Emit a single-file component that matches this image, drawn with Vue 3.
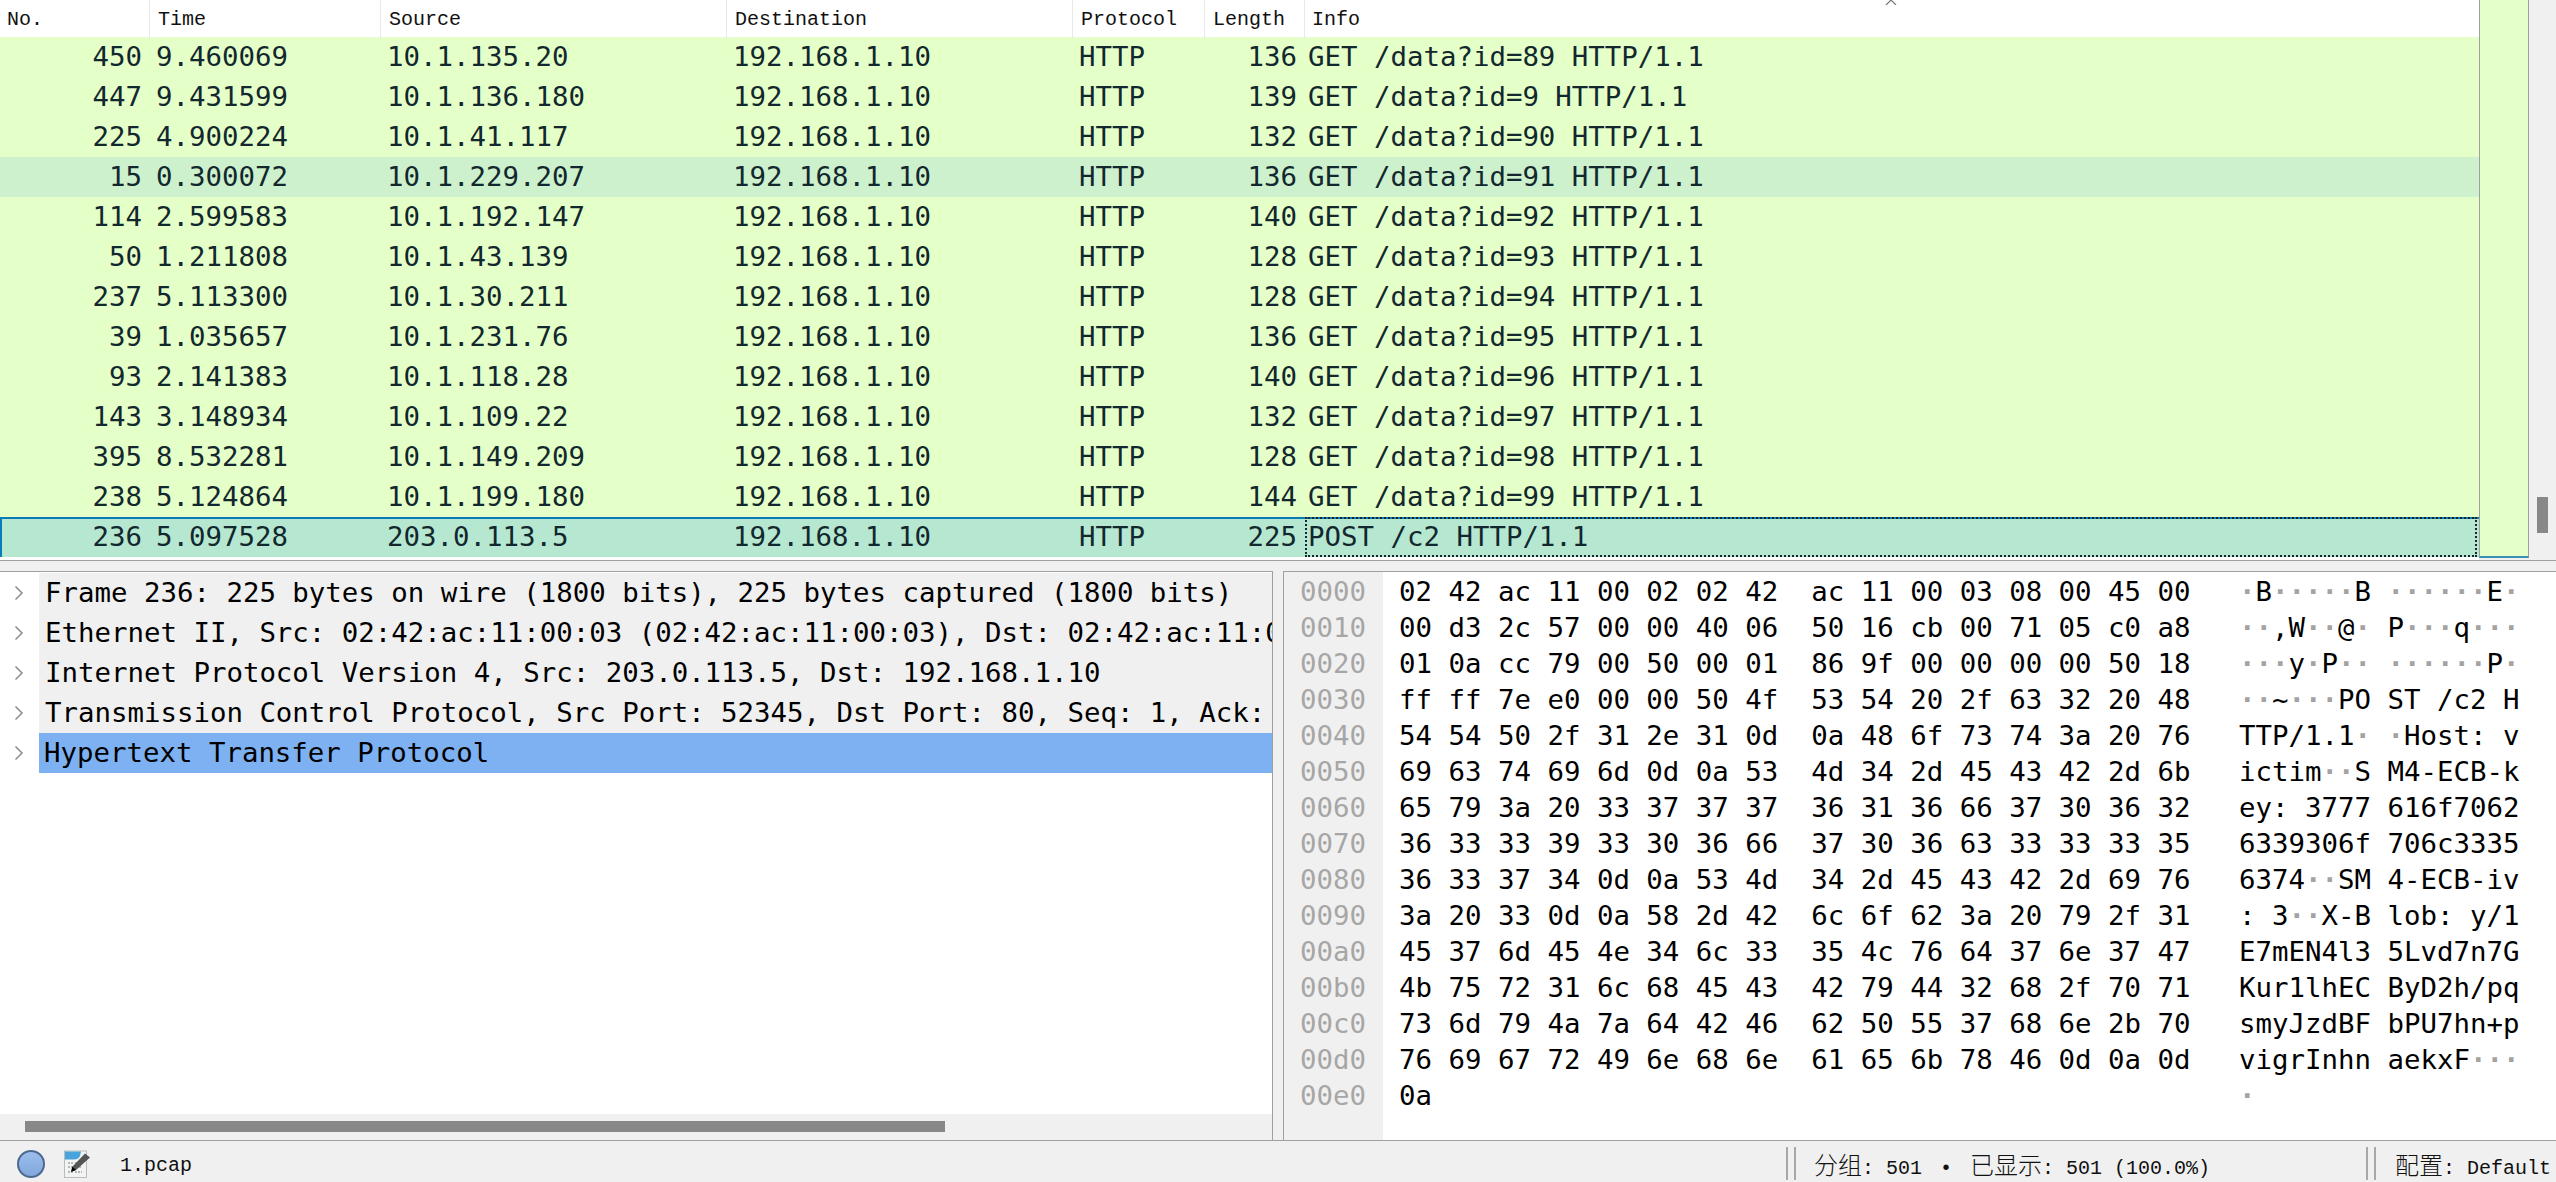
<script setup>
const columns = [
  { label: 'No.', cls: 'col-no' },
  { label: 'Time', cls: 'col-time' },
  { label: 'Source', cls: 'col-source' },
  { label: 'Destination', cls: 'col-dest' },
  { label: 'Protocol', cls: 'col-proto' },
  { label: 'Length', cls: 'col-len' },
  { label: 'Info', cls: 'col-info' }
]

const packets = [
  [450, '9.460069', '10.1.135.20', 136, 'GET /data?id=89 HTTP/1.1'],
  [447, '9.431599', '10.1.136.180', 139, 'GET /data?id=9 HTTP/1.1'],
  [225, '4.900224', '10.1.41.117', 132, 'GET /data?id=90 HTTP/1.1'],
  [15, '0.300072', '10.1.229.207', 136, 'GET /data?id=91 HTTP/1.1'],
  [114, '2.599583', '10.1.192.147', 140, 'GET /data?id=92 HTTP/1.1'],
  [50, '1.211808', '10.1.43.139', 128, 'GET /data?id=93 HTTP/1.1'],
  [237, '5.113300', '10.1.30.211', 128, 'GET /data?id=94 HTTP/1.1'],
  [39, '1.035657', '10.1.231.76', 136, 'GET /data?id=95 HTTP/1.1'],
  [93, '2.141383', '10.1.118.28', 140, 'GET /data?id=96 HTTP/1.1'],
  [143, '3.148934', '10.1.109.22', 132, 'GET /data?id=97 HTTP/1.1'],
  [395, '8.532281', '10.1.149.209', 128, 'GET /data?id=98 HTTP/1.1'],
  [238, '5.124864', '10.1.199.180', 144, 'GET /data?id=99 HTTP/1.1'],
  [236, '5.097528', '203.0.113.5', 225, 'POST /c2 HTTP/1.1']
]

const details = [
  'Frame 236: 225 bytes on wire (1800 bits), 225 bytes captured (1800 bits)',
  'Ethernet II, Src: 02:42:ac:11:00:03 (02:42:ac:11:00:03), Dst: 02:42:ac:11:00',
  'Internet Protocol Version 4, Src: 203.0.113.5, Dst: 192.168.1.10',
  'Transmission Control Protocol, Src Port: 52345, Dst Port: 80, Seq: 1, Ack:',
  'Hypertext Transfer Protocol'
]

const hexLines = [
  '02 42 ac 11 00 02 02 42  ac 11 00 03 08 00 45 00',
  '00 d3 2c 57 00 00 40 06  50 16 cb 00 71 05 c0 a8',
  '01 0a cc 79 00 50 00 01  86 9f 00 00 00 00 50 18',
  'ff ff 7e e0 00 00 50 4f  53 54 20 2f 63 32 20 48',
  '54 54 50 2f 31 2e 31 0d  0a 48 6f 73 74 3a 20 76',
  '69 63 74 69 6d 0d 0a 53  4d 34 2d 45 43 42 2d 6b',
  '65 79 3a 20 33 37 37 37  36 31 36 66 37 30 36 32',
  '36 33 33 39 33 30 36 66  37 30 36 63 33 33 33 35',
  '36 33 37 34 0d 0a 53 4d  34 2d 45 43 42 2d 69 76',
  '3a 20 33 0d 0a 58 2d 42  6c 6f 62 3a 20 79 2f 31',
  '45 37 6d 45 4e 34 6c 33  35 4c 76 64 37 6e 37 47',
  '4b 75 72 31 6c 68 45 43  42 79 44 32 68 2f 70 71',
  '73 6d 79 4a 7a 64 42 46  62 50 55 37 68 6e 2b 70',
  '76 69 67 72 49 6e 68 6e  61 65 6b 78 46 0d 0a 0d',
  '0a'
]

function toCells(line) {
  const bytes = line.trim().split(/\s+/).map((b) => parseInt(b, 16))
  const cells = []
  bytes.forEach((b, i) => {
    if (i === 8) cells.push({ ch: ' ', dot: false })
    const printable = b >= 32 && b < 127
    cells.push({ ch: printable ? String.fromCharCode(b) : '·', dot: !printable })
  })
  return cells
}

const dump = hexLines.map((hex, i) => ({
  offset: (i * 16).toString(16).padStart(4, '0'),
  hex,
  cells: toCells(hex)
}))
</script>

<template>
  <div class="app">
    <section class="list-pane">
      <div class="table">
        <div class="head">
          <div v-for="c in columns" :key="c.label" class="head-cell" :class="c.cls">{{ c.label }}</div>
          <svg class="sort-mark" width="12" height="5" viewBox="0 0 12 5">
            <path d="M1 5 L6 0 L11 5" fill="none" stroke="#777" stroke-width="1.2" />
          </svg>
        </div>
        <div
          v-for="(p, i) in packets"
          :key="p[0]"
          class="row"
          :class="{ alt: p[0] === 15, selected: i === packets.length - 1 }"
        >
          <div class="cell num">{{ p[0] }}</div>
          <div class="cell">{{ p[1] }}</div>
          <div class="cell">{{ p[2] }}</div>
          <div class="cell">192.168.1.10</div>
          <div class="cell">HTTP</div>
          <div class="cell num">{{ p[3] }}</div>
          <div class="cell info">{{ p[4] }}</div>
        </div>
      </div>
      <div class="minimap"></div>
      <div class="vscroll"><div class="vthumb"></div></div>
    </section>

    <section class="bottom">
      <div class="detail-pane">
        <div class="detail-rows">
          <div v-for="(d, i) in details" :key="i" class="detail-row" :class="{ active: i === 4 }">
            <span class="chevron">
              <svg width="10" height="16" viewBox="0 0 10 16"><path d="M1.5 1.5 L8 8 L1.5 14.5" fill="none" stroke="#8c8c8c" stroke-width="1.5" /></svg>
            </span>
            <span class="detail-text">{{ d }}</span>
          </div>
        </div>
        <div class="hscroll"><div class="hthumb"></div></div>
      </div>
      <div class="hex-pane">
        <div class="offsets">
          <div v-for="r in dump" :key="r.offset" class="offset">{{ r.offset }}</div>
        </div>
        <div class="hex-body">
          <div v-for="r in dump" :key="r.offset" class="hex-row">
            <span class="hex">{{ r.hex }}</span>
            <span class="ascii"><span v-for="(c, j) in r.cells" :key="j" :class="{ dot: c.dot }">{{ c.ch }}</span></span>
          </div>
        </div>
      </div>
    </section>

    <footer class="status">
      <div class="status-left">
        <svg class="led" width="28" height="28" viewBox="0 0 28 28">
          <defs>
            <linearGradient id="ledFill" x1="0" y1="0" x2="0" y2="1">
              <stop offset="0" stop-color="#9dbfec" />
              <stop offset="1" stop-color="#7fa6dc" />
            </linearGradient>
          </defs>
          <circle cx="14" cy="14" r="13" fill="url(#ledFill)" stroke="#4c6a8e" stroke-width="2" />
        </svg>
        <svg class="edit" width="28" height="28" viewBox="0 0 28 28">
          <rect x="0.5" y="1" width="22" height="26.5" fill="#f2f4f4" stroke="#b9bcbd" />
          <path d="M1 1.5 H17 L16 6 Q14 10 9 9.5 L1 9.5 Z" fill="#4ba3dc" />
          <path d="M4 13 H9 M11 13 H14 M4 17 H10 M12 17 H18 M4 22 H9 M11 22 H18" stroke="#b5b8b8" stroke-width="2" stroke-dasharray="2 1" fill="none" />
          <path d="M21 3.5 L26 7.5 L12 20 L7.5 21.5 L8.5 16.5 Z" fill="#555" />
          <path d="M8.2 16.8 L12 20 L7 22 Z" fill="#000" />
        </svg>
        <span class="filename">1.pcap</span>
      </div>
      <div class="status-sep"></div>
      <div class="status-packets">
        <span class="cjk">分组</span>: 501 <span class="bullet">•</span> <span class="cjk">已显示</span>: 501 (100.0%)
      </div>
      <div class="status-sep"></div>
      <div class="status-profile"><span class="cjk">配置</span>: Default</div>
    </footer>
  </div>
</template>

<style scoped>
.app {
  width: 2556px;
  height: 1182px;
  display: flex;
  flex-direction: column;
  background: #f0f0f0;
  overflow: hidden;
  font-family: "DejaVu Sans Mono", monospace;
  font-size: 27.4px;
  color: #000;
}

.list-pane {
  height: 561px;
  flex: none;
  display: flex;
  border-bottom: 1px solid #a0a0a0;
  box-sizing: border-box;
}
.table {
  width: 2479px;
  background: #fff;
  flex: none;
}
.head,
.row {
  display: grid;
  grid-template-columns: 150px 231px 346px 346px 132px 100px 1fr;
}
.head {
  position: relative;
  height: 37px;
  font-family: "Liberation Mono", monospace;
  font-size: 20px;
  color: #111;
}
.head-cell {
  padding-left: 8px;
  line-height: 39px;
  border-right: 1px solid #e8e8e8;
}
.col-no,
.col-info {
  padding-left: 7px;
}
.col-info {
  border-right: none;
}
.sort-mark {
  position: absolute;
  left: 1885px;
  top: 0;
}
.row {
  height: 40px;
  line-height: 39px;
  background: #e4ffc7;
  color: #12272e;
}
.row.alt {
  background: #cdf1cd;
}
.row.selected {
  background: #b5e7d1;
  box-shadow: inset 0 2px 0 #0a7cb5, inset 2px 0 0 #0a7cb5;
}
.cell {
  padding-left: 6px;
  white-space: pre;
}
.cell.num {
  padding: 0 8px 0 0;
  text-align: right;
}
.cell.info {
  padding-left: 3px;
}
.row.selected .info {
  margin-right: 2px;
  outline: 2px dotted #12272e;
  outline-offset: -2px;
}

.minimap {
  width: 50px;
  flex: none;
  height: 558px;
  box-sizing: border-box;
  background: #e4ffc7;
  border-left: 1px solid #a0a0a0;
  border-right: 1px solid #a0a0a0;
  border-bottom: 2px solid #3a8fb5;
}
.vscroll {
  flex: 1;
  padding: 497px 0 0 8px;
}
.vthumb {
  width: 11px;
  height: 36px;
  background: #888;
}

.bottom {
  height: 569px;
  flex: none;
  margin-top: 10px;
  display: flex;
  justify-content: space-between;
}
.detail-pane {
  width: 1273px;
  box-sizing: border-box;
  border-top: 1px solid #a0a0a0;
  border-right: 1px solid #a0a0a0;
  background: #fff;
  display: flex;
  flex-direction: column;
}
.detail-rows {
  flex: 1;
  padding-top: 1px;
  overflow: hidden;
}
.detail-row {
  height: 40px;
  line-height: 40px;
  display: flex;
  white-space: pre;
}
.chevron {
  width: 39px;
  flex: none;
  display: flex;
  align-items: center;
  padding-left: 14px;
  box-sizing: border-box;
  background: #fff;
}
.detail-text {
  flex: 1;
  padding-left: 6px;
  background: #f0f0f0;
  overflow: hidden;
}
.detail-row.active .detail-text {
  padding-left: 5px;
  background: #7eb1f2;
}
.hscroll {
  height: 26px;
  flex: none;
  background: #f0f0f0;
  padding: 7px 0 0 25px;
  box-sizing: border-box;
}
.hthumb {
  width: 920px;
  height: 11px;
  background: #888;
}

.hex-pane {
  width: 1273px;
  box-sizing: border-box;
  border-top: 1px solid #a0a0a0;
  border-left: 1px solid #a0a0a0;
  background: #fff;
  display: flex;
  line-height: 36px;
}
.offsets {
  width: 99px;
  flex: none;
  box-sizing: border-box;
  padding: 2px 0 0 16px;
  background: #f0f0f0;
  color: #a6a6a6;
}
.hex-body {
  padding: 2px 0 0 16px;
}
.hex-row {
  display: flex;
  height: 36px;
  white-space: pre;
}
.hex {
  width: 840px;
  flex: none;
}
.dot {
  color: #a3a3a3;
  font-weight: 700;
}

.status {
  flex: 1;
  display: flex;
  align-items: center;
  box-sizing: border-box;
  padding-top: 4px;
  border-top: 1px solid #a0a0a0;
  font-family: "Liberation Mono", "Noto Sans CJK SC", monospace;
  font-size: 20px;
  color: #111;
  white-space: pre;
}
.status-left {
  width: 1786px;
  flex: none;
  box-sizing: border-box;
  padding-left: 17px;
  display: flex;
  align-items: center;
}
.led {
  flex: none;
}
.edit {
  flex: none;
  margin-left: 19px;
}
.filename {
  margin-left: 28px;
  padding-top: 4px;
}
.status-sep {
  width: 10px;
  height: 33px;
  flex: none;
  box-sizing: border-box;
  border-left: 2px solid #a8a8a8;
  border-right: 2px solid #a8a8a8;
}
.status-packets {
  width: 570px;
  flex: none;
  box-sizing: border-box;
  padding-left: 18px;
}
.status-profile {
  padding-left: 19px;
}
.cjk {
  font-family: "Noto Sans CJK SC", sans-serif;
  font-size: 24px;
  font-weight: 300;
}
.bullet {
  display: inline-block;
  width: 24px;
  text-align: center;
}
</style>

<style>
html, body {
  margin: 0;
  background: #f0f0f0;
}
</style>
